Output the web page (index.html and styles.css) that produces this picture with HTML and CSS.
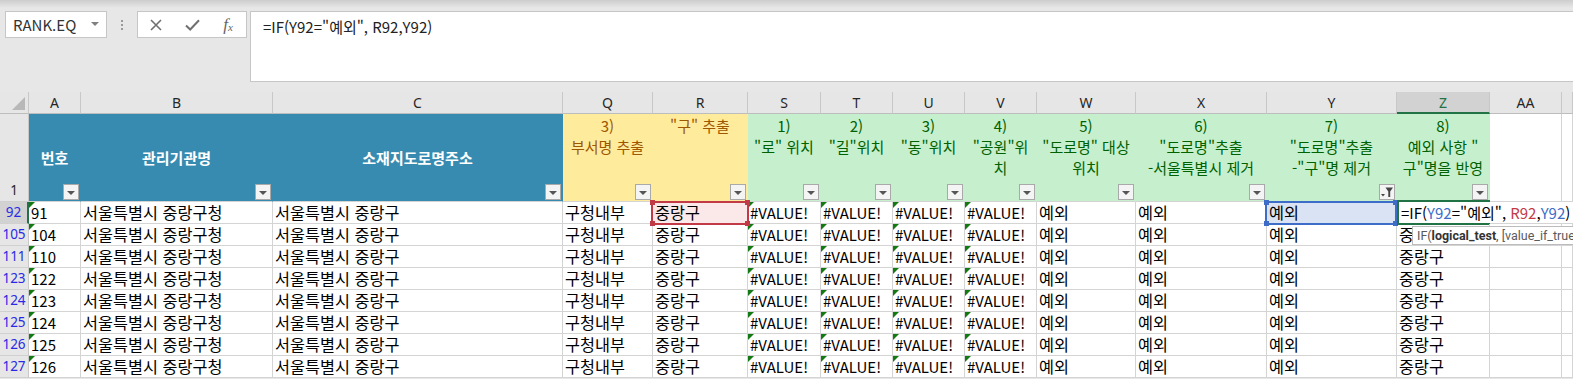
FILE: index.html
```html
<!DOCTYPE html>
<html lang="ko">
<head>
    <meta charset="UTF-8">
    <title>통합 문서 - 중랑구</title>
    <link rel="stylesheet" href="styles.css">
</head>
<body>
    <div class="toolbar">
        <div class="namebox">
            <span>RANK.EQ</span>
            <span class="nb-arrow"></span>
        </div>
        <div class="grip"><i></i><i></i><i></i></div>
        <div class="fbtns">
            <span class="fbtn">
                <svg width="12" height="12" viewBox="0 0 12 12"><path d="M1 1L11 11M11 1L1 11" stroke="#707070" stroke-width="1.6" fill="none"/></svg>
            </span>
            <span class="fbtn">
                <svg width="15" height="12" viewBox="0 0 15 12"><path d="M1 6.5L5.2 10.5L14 1.2" stroke="#707070" stroke-width="2" fill="none"/></svg>
            </span>
            <span class="fbtn fx"><i>f</i><i class="sx">x</i></span>
        </div>
        <div class="formula">=IF(Y92="예외", R92,Y92)</div>
    </div>

    <div class="sheet">
        <!-- column letters -->
        <div class="ch corner"></div>
        <div class="ch">A</div>
        <div class="ch">B</div>
        <div class="ch">C</div>
        <div class="ch">Q</div>
        <div class="ch">R</div>
        <div class="ch">S</div>
        <div class="ch">T</div>
        <div class="ch">U</div>
        <div class="ch">V</div>
        <div class="ch">W</div>
        <div class="ch">X</div>
        <div class="ch">Y</div>
        <div class="ch ch-act">Z</div>
        <div class="ch">AA</div>
        <div class="ch"></div>

        <!-- header row 1 -->
        <div class="rh rh-bottom">1</div>
        <div class="h teal">번호<span class="fb"></span></div>
        <div class="h teal">관리기관명<span class="fb"></span></div>
        <div class="h teal">소재지도로명주소<span class="fb"></span></div>
        <div class="h yel">3)<br>부서명 추출<span class="fb"></span></div>
        <div class="h yel">"구" 추출<span class="fb"></span></div>
        <div class="h grn">1)<br>"로" 위치<span class="fb"></span></div>
        <div class="h grn">2)<br>"길"위치<span class="fb"></span></div>
        <div class="h grn">3)<br>"동"위치<span class="fb"></span></div>
        <div class="h grn">4)<br>"공원"위<br>치<span class="fb"></span></div>
        <div class="h grn">5)<br>"도로명" 대상<br>위치<span class="fb"></span></div>
        <div class="h grn">6)<br>"도로명"추출<br>-서울특별시 제거<span class="fb"></span></div>
        <div class="h grn">7)<br>"도로명"추출<br>-"구"명 제거<span class="fb fb-on">
            <svg width="14" height="14" viewBox="0 0 14 14"><path d="M1 9H5L3 11.5Z" fill="#444"/><path d="M5.5 2.5H13L10.2 6.5V12H8.3V6.5Z" fill="#444"/></svg>
        </span></div>
        <div class="h grn">8)<br>예외 사항 "<br>구"명을 반영<span class="fb"></span></div>
        <div class="h"></div>
        <div class="h"></div>

        <!-- row 92 -->
        <div class="rh filt rh-act">92</div>
        <div class="c tri">91</div>
        <div class="c ko">서울특별시 중랑구청</div>
        <div class="c ko">서울특별시 중랑구</div>
        <div class="c ko">구청내부</div>
        <div class="c ko sel ref-red">중랑구<span class="refbox red"><b class="k tl"></b><b class="k tr"></b><b class="k bl"></b><b class="k br"></b></span></div>
        <div class="c tri">#VALUE!</div>
        <div class="c tri">#VALUE!</div>
        <div class="c tri">#VALUE!</div>
        <div class="c tri">#VALUE!</div>
        <div class="c ko">예외</div>
        <div class="c ko">예외</div>
        <div class="c ko sel ref-blue">예외<span class="refbox blue"><b class="k tl"></b><b class="k tr"></b><b class="k bl"></b><b class="k br"></b></span></div>
        <div class="c editor"><span class="edit-text">=IF(<em class="rb">Y92</em>="예외", <em class="rr">R92</em>,<em class="rb">Y92</em>)</span><span class="actbox"></span></div>
        <div class="c"></div>
        <div class="c"></div>

        <!-- row 105 -->
        <div class="rh filt">105</div>
        <div class="c tri">104</div>
        <div class="c ko">서울특별시 중랑구청</div>
        <div class="c ko">서울특별시 중랑구</div>
        <div class="c ko">구청내부</div>
        <div class="c ko">중랑구</div>
        <div class="c tri">#VALUE!</div>
        <div class="c tri">#VALUE!</div>
        <div class="c tri">#VALUE!</div>
        <div class="c tri">#VALUE!</div>
        <div class="c ko">예외</div>
        <div class="c ko">예외</div>
        <div class="c ko">예외</div>
        <div class="c ko tip-cell">중랑구<span class="tip">IF(<b>logical_test</b>, [value_if_true]</span></div>
        <div class="c"></div>
        <div class="c"></div>

        <!-- row 111 -->
        <div class="rh filt">111</div>
        <div class="c tri">110</div>
        <div class="c ko">서울특별시 중랑구청</div>
        <div class="c ko">서울특별시 중랑구</div>
        <div class="c ko">구청내부</div>
        <div class="c ko">중랑구</div>
        <div class="c tri">#VALUE!</div>
        <div class="c tri">#VALUE!</div>
        <div class="c tri">#VALUE!</div>
        <div class="c tri">#VALUE!</div>
        <div class="c ko">예외</div>
        <div class="c ko">예외</div>
        <div class="c ko">예외</div>
        <div class="c ko">중랑구</div>
        <div class="c"></div>
        <div class="c"></div>

        <!-- row 123 -->
        <div class="rh filt">123</div>
        <div class="c tri">122</div>
        <div class="c ko">서울특별시 중랑구청</div>
        <div class="c ko">서울특별시 중랑구</div>
        <div class="c ko">구청내부</div>
        <div class="c ko">중랑구</div>
        <div class="c tri">#VALUE!</div>
        <div class="c tri">#VALUE!</div>
        <div class="c tri">#VALUE!</div>
        <div class="c tri">#VALUE!</div>
        <div class="c ko">예외</div>
        <div class="c ko">예외</div>
        <div class="c ko">예외</div>
        <div class="c ko">중랑구</div>
        <div class="c"></div>
        <div class="c"></div>

        <!-- row 124 -->
        <div class="rh filt">124</div>
        <div class="c tri">123</div>
        <div class="c ko">서울특별시 중랑구청</div>
        <div class="c ko">서울특별시 중랑구</div>
        <div class="c ko">구청내부</div>
        <div class="c ko">중랑구</div>
        <div class="c tri">#VALUE!</div>
        <div class="c tri">#VALUE!</div>
        <div class="c tri">#VALUE!</div>
        <div class="c tri">#VALUE!</div>
        <div class="c ko">예외</div>
        <div class="c ko">예외</div>
        <div class="c ko">예외</div>
        <div class="c ko">중랑구</div>
        <div class="c"></div>
        <div class="c"></div>

        <!-- row 125 -->
        <div class="rh filt">125</div>
        <div class="c tri">124</div>
        <div class="c ko">서울특별시 중랑구청</div>
        <div class="c ko">서울특별시 중랑구</div>
        <div class="c ko">구청내부</div>
        <div class="c ko">중랑구</div>
        <div class="c tri">#VALUE!</div>
        <div class="c tri">#VALUE!</div>
        <div class="c tri">#VALUE!</div>
        <div class="c tri">#VALUE!</div>
        <div class="c ko">예외</div>
        <div class="c ko">예외</div>
        <div class="c ko">예외</div>
        <div class="c ko">중랑구</div>
        <div class="c"></div>
        <div class="c"></div>

        <!-- row 126 -->
        <div class="rh filt">126</div>
        <div class="c tri">125</div>
        <div class="c ko">서울특별시 중랑구청</div>
        <div class="c ko">서울특별시 중랑구</div>
        <div class="c ko">구청내부</div>
        <div class="c ko">중랑구</div>
        <div class="c tri">#VALUE!</div>
        <div class="c tri">#VALUE!</div>
        <div class="c tri">#VALUE!</div>
        <div class="c tri">#VALUE!</div>
        <div class="c ko">예외</div>
        <div class="c ko">예외</div>
        <div class="c ko">예외</div>
        <div class="c ko">중랑구</div>
        <div class="c"></div>
        <div class="c"></div>

        <!-- row 127 -->
        <div class="rh filt">127</div>
        <div class="c tri">126</div>
        <div class="c ko">서울특별시 중랑구청</div>
        <div class="c ko">서울특별시 중랑구</div>
        <div class="c ko">구청내부</div>
        <div class="c ko">중랑구</div>
        <div class="c tri">#VALUE!</div>
        <div class="c tri">#VALUE!</div>
        <div class="c tri">#VALUE!</div>
        <div class="c tri">#VALUE!</div>
        <div class="c ko">예외</div>
        <div class="c ko">예외</div>
        <div class="c ko">예외</div>
        <div class="c ko">중랑구</div>
        <div class="c"></div>
        <div class="c"></div>
    </div>
</body>
</html>
```

FILE: styles.css
```css
body {
    margin: 0;
    padding: 0;
    font-family: "Noto Sans CJK KR", "Noto Sans", sans-serif;
    background-color: #e7e7e7;
    overflow: hidden;
}

/* formula bar */
.toolbar {
    height: 92px;
    box-sizing: border-box;
    padding-top: 11px;
    display: flex;
    align-items: flex-start;
    background: linear-gradient(#cdcdcd, #e7e7e7 8px);
}
.namebox {
    margin-left: 5px;
    width: 102px;
    height: 27px;
    box-sizing: border-box;
    border: 1px solid #c6c6c6;
    background: #fff;
    display: flex;
    align-items: center;
    justify-content: space-between;
    padding: 0 7px 0 7px;
    font-size: 15px;
    color: #333;
}
.nb-arrow {
    border-left: 4px solid transparent;
    border-right: 4px solid transparent;
    border-top: 4px solid #808080;
    margin-top: -2px;
}
.grip {
    width: 30px;
    height: 27px;
    display: flex;
    flex-direction: column;
    align-items: center;
    justify-content: center;
    gap: 2px;
}
.grip i {
    width: 2px;
    height: 2px;
    background: #9a9a9a;
}
.fbtns {
    width: 110px;
    height: 27px;
    box-sizing: border-box;
    border: 1px solid #c6c6c6;
    background: #fff;
    display: flex;
    align-items: center;
}
.fbtn {
    width: 36px;
    display: flex;
    justify-content: center;
    align-items: center;
}
.fx {
    font-family: "Liberation Serif", serif;
    font-size: 17px;
    color: #666;
    line-height: 1;
}
.fx .sx {
    font-size: 11px;
    margin-top: 5px;
}
.formula {
    margin-left: 3px;
    flex: 1;
    height: 71px;
    box-sizing: border-box;
    border: 1px solid #c6c6c6;
    border-right: none;
    background: #fff;
    padding: 4px 12px;
    font-size: 15px;
    line-height: 21px;
    color: #222;
}

/* grid */
.sheet {
    display: grid;
    grid-template-columns: 29px 52px 192px 290px 90px 95px 73px 72px 72px 72px 99px 131px 130px 93px 72px 11px;
    grid-template-rows: 22px 88px;
    grid-auto-rows: 22px;
    background: #fff;
}
.sheet > div {
    box-sizing: border-box;
    position: relative;
}
.ch {
    background: #e6e6e6;
    border-right: 1px solid #c8c8c8;
    border-bottom: 1px solid #bdbdbd;
    text-align: center;
    font-family: "Noto Sans", sans-serif;
    font-size: 14px;
    line-height: 21px;
    color: #262626;
}
.ch-act {
    background: #d2d2d2;
    color: #217346;
    border-bottom: 2px solid #217346;
}
.corner::after {
    content: "";
    position: absolute;
    right: 3px;
    bottom: 3px;
    border-left: 13px solid transparent;
    border-bottom: 13px solid #b8b8b8;
}
.rh {
    background: #e6e6e6;
    border-right: 1px solid #c8c8c8;
    border-bottom: 1px solid #d0d0d0;
    text-align: center;
    font-family: "Noto Sans", sans-serif;
    font-size: 13.5px;
    line-height: 21px;
    color: #262626;
}
.rh-bottom {
    display: flex;
    align-items: flex-end;
    justify-content: center;
}
.filt {
    color: #2a2ae6;
}
.rh-act {
    background: #d2d2d2;
    border-right: 2px solid #217346;
}

/* header row */
.h {
    border-right: 1px solid #d4d4d4;
    border-bottom: 1px solid #d4d4d4;
    font-size: 15px;
    line-height: 21px;
    text-align: center;
    white-space: nowrap;
    padding-top: 1px;
}
.teal {
    background: #378bb0;
    border-right-color: #378bb0;
    color: #fff;
    font-weight: bold;
    display: flex;
    align-items: center;
    justify-content: center;
    padding-top: 0;
}
.yel {
    background: #ffeb9c;
    border-right-color: #ffeb9c;
    color: #9c5700;
}
.grn {
    background: #c6efce;
    border-right-color: #c6efce;
    color: #006100;
}
.fb {
    position: absolute;
    right: 1px;
    bottom: 1px;
    width: 16px;
    height: 16px;
    box-sizing: border-box;
    border: 1px solid #a9a9a9;
    background: #f4f4f4;
    display: flex;
    align-items: center;
    justify-content: center;
}
.fb::after {
    content: "";
    border-left: 4px solid transparent;
    border-right: 4px solid transparent;
    border-top: 4px solid #555;
    margin-top: 1px;
}
.fb-on::after {
    display: none;
}

/* data cells */
.c {
    border-right: 1px solid #d4d4d4;
    border-bottom: 1px solid #d4d4d4;
    padding-left: 2px;
    font-size: 15px;
    line-height: 21px;
    color: #000;
    white-space: nowrap;
}
.c.ko {
    font-size: 16.3px;
}
.tri::before {
    content: "";
    position: absolute;
    left: 0;
    top: 0;
    border-top: 6px solid #137a13;
    border-right: 6px solid transparent;
}
.sel {
    z-index: 2;
}
.ref-red {
    background: #fbe8e9;
}
.ref-blue {
    background: #dae3f3;
}
.refbox {
    position: absolute;
    left: -2px;
    top: -1px;
    right: -2px;
    bottom: -2px;
    border: 2px solid #c23a45;
}
.refbox.blue {
    border-color: #3d6cc9;
    right: -1px;
}
.k {
    position: absolute;
    width: 5px;
    height: 5px;
    background: #c23a45;
}
.blue .k {
    background: #3d6cc9;
}
.k.tl { left: -3px; top: -3px; }
.k.tr { right: -3px; top: -3px; }
.k.bl { left: -3px; bottom: -3px; }
.k.br { right: -3px; bottom: -3px; }

.editor {
    z-index: 3;
    padding-left: 4px;
}
.edit-text {
    position: relative;
    z-index: 1;
    background: #fff;
    padding-right: 3px;
}
.edit-text em {
    font-style: normal;
}
.rb {
    color: #3d6cc9;
}
.rr {
    color: #c23a45;
}
.actbox {
    position: absolute;
    left: 0;
    top: -2px;
    right: -1px;
    bottom: -2px;
    border: 2px solid #217346;
    border-right: none;
}

.tip-cell {
    z-index: 4;
}
.tip {
    position: absolute;
    left: 15px;
    top: 2px;
    height: 19px;
    box-sizing: border-box;
    border: 1px solid #bcbcbc;
    border-right: none;
    background: #fff;
    padding: 0 4px;
    font-family: Roboto, "Noto Sans", sans-serif;
    font-size: 12.5px;
    line-height: 17px;
    color: #5a5a5a;
    white-space: nowrap;
}
.tip b {
    color: #333;
}
```
